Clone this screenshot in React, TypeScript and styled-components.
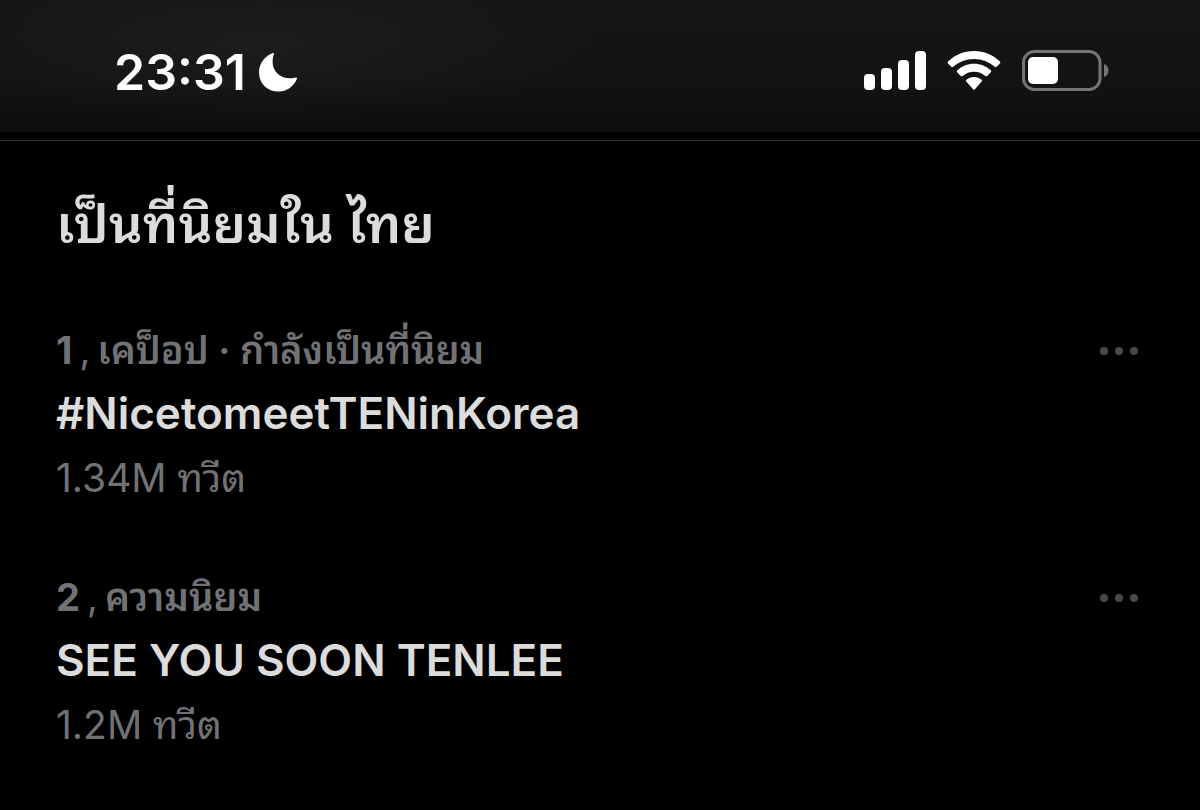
import React from 'react';
import styled, { createGlobalStyle } from 'styled-components';

const GlobalStyle = createGlobalStyle`
  * { box-sizing: border-box; }
  html, body { margin: 0; background: #000; }
  body {
    font-family: Inter, "Noto Sans Thai Looped", Loma, Garuda, "Noto Sans Thai", "Noto Sans", "Liberation Sans", sans-serif;
    -webkit-font-smoothing: antialiased;
  }
`;

const Page = styled.div`
  min-height: 100vh;
  background: #000;
  color: #dcdcdc;
`;

const StatusBar = styled.header`
  display: flex;
  align-items: center;
  justify-content: space-between;
  height: 132px;
  padding: 8px 90px 0 114px;
  color: #fff;
  background:
    radial-gradient(ellipse 340px 80px at 260px 44px, rgba(36, 37, 38, 0.5), transparent),
    linear-gradient(#141616, #111314 60%, #0c0d0e);
`;

const Clock = styled.div`
  display: flex;
  align-items: center;
  gap: 12px;
  padding-top: 4px;
  font-size: 50px;
  line-height: 60px;
  font-weight: 600;
`;

const Indicators = styled.div`
  display: flex;
  align-items: center;
  gap: 20px;
`;

const Content = styled.main`
  margin-top: 8px;
  padding: 42px 60px 40px 56px;
  border-top: 1px solid #323232;
`;

const Heading = styled.h1`
  height: 82px;
  margin: 0 0 53px;
  font-size: 53px;
  line-height: 82px;
  font-weight: 600;
`;

const TrendList = styled.ol`
  display: flex;
  flex-direction: column;
  gap: 55px;
  margin: 0;
  padding: 0;
  list-style: none;
`;

const Trend = styled.li`
  display: flex;
  align-items: flex-start;
  justify-content: space-between;
`;

const TrendText = styled.div`
  min-width: 0;
`;

const Meta = styled.p`
  height: 64px;
  margin: 0;
  color: #717276;
  font-size: 38px;
  line-height: 64px;
  font-weight: 600;
  white-space: nowrap;
`;

const Rank = styled.span`
  font-weight: 700;
`;

const Comma = styled.span`
  margin: 0 7px;
  font-weight: 400;
`;

const Name = styled.h2`
  height: 62px;
  margin: 0;
  font-size: 44px;
  line-height: 62px;
  font-weight: 600;
`;

const Count = styled.p`
  height: 66px;
  margin: 0;
  color: #717276;
  font-size: 39px;
  line-height: 68px;
  font-weight: 400;
`;

const MoreButton = styled.button`
  display: flex;
  align-items: center;
  height: 66px;
  padding: 0;
  border: 0;
  background: none;
  color: #48494b;
`;

const trends = [
  { rank: 1, category: 'เคป็อป · กำลังเป็นที่นิยม', name: '#NicetomeetTENinKorea', count: '1.34M ทวีต' },
  { rank: 2, category: 'ความนิยม', name: 'SEE YOU SOON TENLEE', count: '1.2M ทวีต' },
];

const Moon = () => (
  <svg width="40" height="40" viewBox="0 0 40 40" fill="currentColor" aria-hidden="true">
    <path d="M14.5 1.2C15.800 .5 16.300 1.200 15.900 2.300C14.300 6 14.100 11.500 15.500 15.500C18.500 23.500 26.500 27.800 36.500 25.700C38.600 25.200 39.500 25.800 38.800 27.300C35.600 34.600 28.700 39.600 20.600 39.600C9.400 39.600 1 31.400 1 20.400C1 11.500 6.600 4.300 14.500 1.200Z" />
  </svg>
);

const Signal = () => (
  <svg width="62" height="40" viewBox="0 0 62 40" fill="currentColor" aria-hidden="true">
    <rect x="0" y="24" width="11" height="16" rx="4" />
    <rect x="17" y="18" width="11" height="22" rx="4" />
    <rect x="34" y="10" width="11" height="30" rx="4" />
    <rect x="51" y="1" width="11" height="39" rx="4" />
  </svg>
);

const Wifi = () => (
  <svg width="56" height="40" viewBox="0 0 56 40" fill="currentColor" aria-hidden="true">
    <path d="M28 1C38 1 47 5 54 11.500Q54.900 12.400 54 13.400L50.600 16.800Q49.700 17.700 48.700 16.800C43 11.800 36 8.900 28 8.900C20 8.900 13 11.800 7.300 16.800Q6.300 17.700 5.400 16.800L2 13.400Q1.100 12.400 2 11.500C9 5 18 1 28 1Z" />
    <path d="M28 13.700C34.500 13.700 40.300 16.200 44.800 20.300Q45.800 21.300 44.800 22.300L41.200 25.900Q40.300 26.800 39.300 25.900C36.200 23.200 32.300 21.700 28 21.700C23.700 21.700 19.800 23.200 16.700 25.900Q15.700 26.800 14.800 25.900L11.200 22.300Q10.200 21.300 11.200 20.300C15.700 16.200 21.500 13.700 28 13.700Z" />
    <path d="M28 27C31 27 33.700 28.100 35.700 29.800Q36.600 30.700 35.700 31.600L28.900 39.200Q28 40.100 27.100 39.200L20.300 31.600Q19.400 30.700 20.300 29.800C22.300 28.100 25 27 28 27Z" />
  </svg>
);

const Battery = () => (
  <svg width="88" height="41" viewBox="0 0 88 41" aria-hidden="true">
    <rect x="1.500" y="1.500" width="76.500" height="38" rx="11" fill="none" stroke="#737576" strokeWidth="3" />
    <rect x="6" y="7" width="30" height="27" rx="5" fill="#fff" />
    <path d="M82 14C88 15.500 88 25.500 82 27Z" fill="#737576" />
  </svg>
);

const Dots = () => (
  <svg width="40" height="10" viewBox="0 0 40 10" fill="currentColor" aria-hidden="true">
    <circle cx="4" cy="5" r="4" />
    <circle cx="19" cy="5" r="4" />
    <circle cx="34" cy="5" r="4" />
  </svg>
);

export default function App() {
  return (
    <Page>
      <GlobalStyle />
      <StatusBar>
        <Clock>
          <time>23:31</time>
          <Moon />
        </Clock>
        <Indicators>
          <Signal />
          <Wifi />
          <Battery />
        </Indicators>
      </StatusBar>
      <Content>
        <Heading>เป็นที่นิยมใน ไทย</Heading>
        <TrendList>
          {trends.map((t) => (
            <Trend key={t.rank}>
              <TrendText>
                <Meta>
                  <Rank>{t.rank}</Rank>
                  <Comma>,</Comma>
                  {t.category}
                </Meta>
                <Name>{t.name}</Name>
                <Count>{t.count}</Count>
              </TrendText>
              <MoreButton type="button" aria-label="More">
                <Dots />
              </MoreButton>
            </Trend>
          ))}
        </TrendList>
      </Content>
    </Page>
  );
}
